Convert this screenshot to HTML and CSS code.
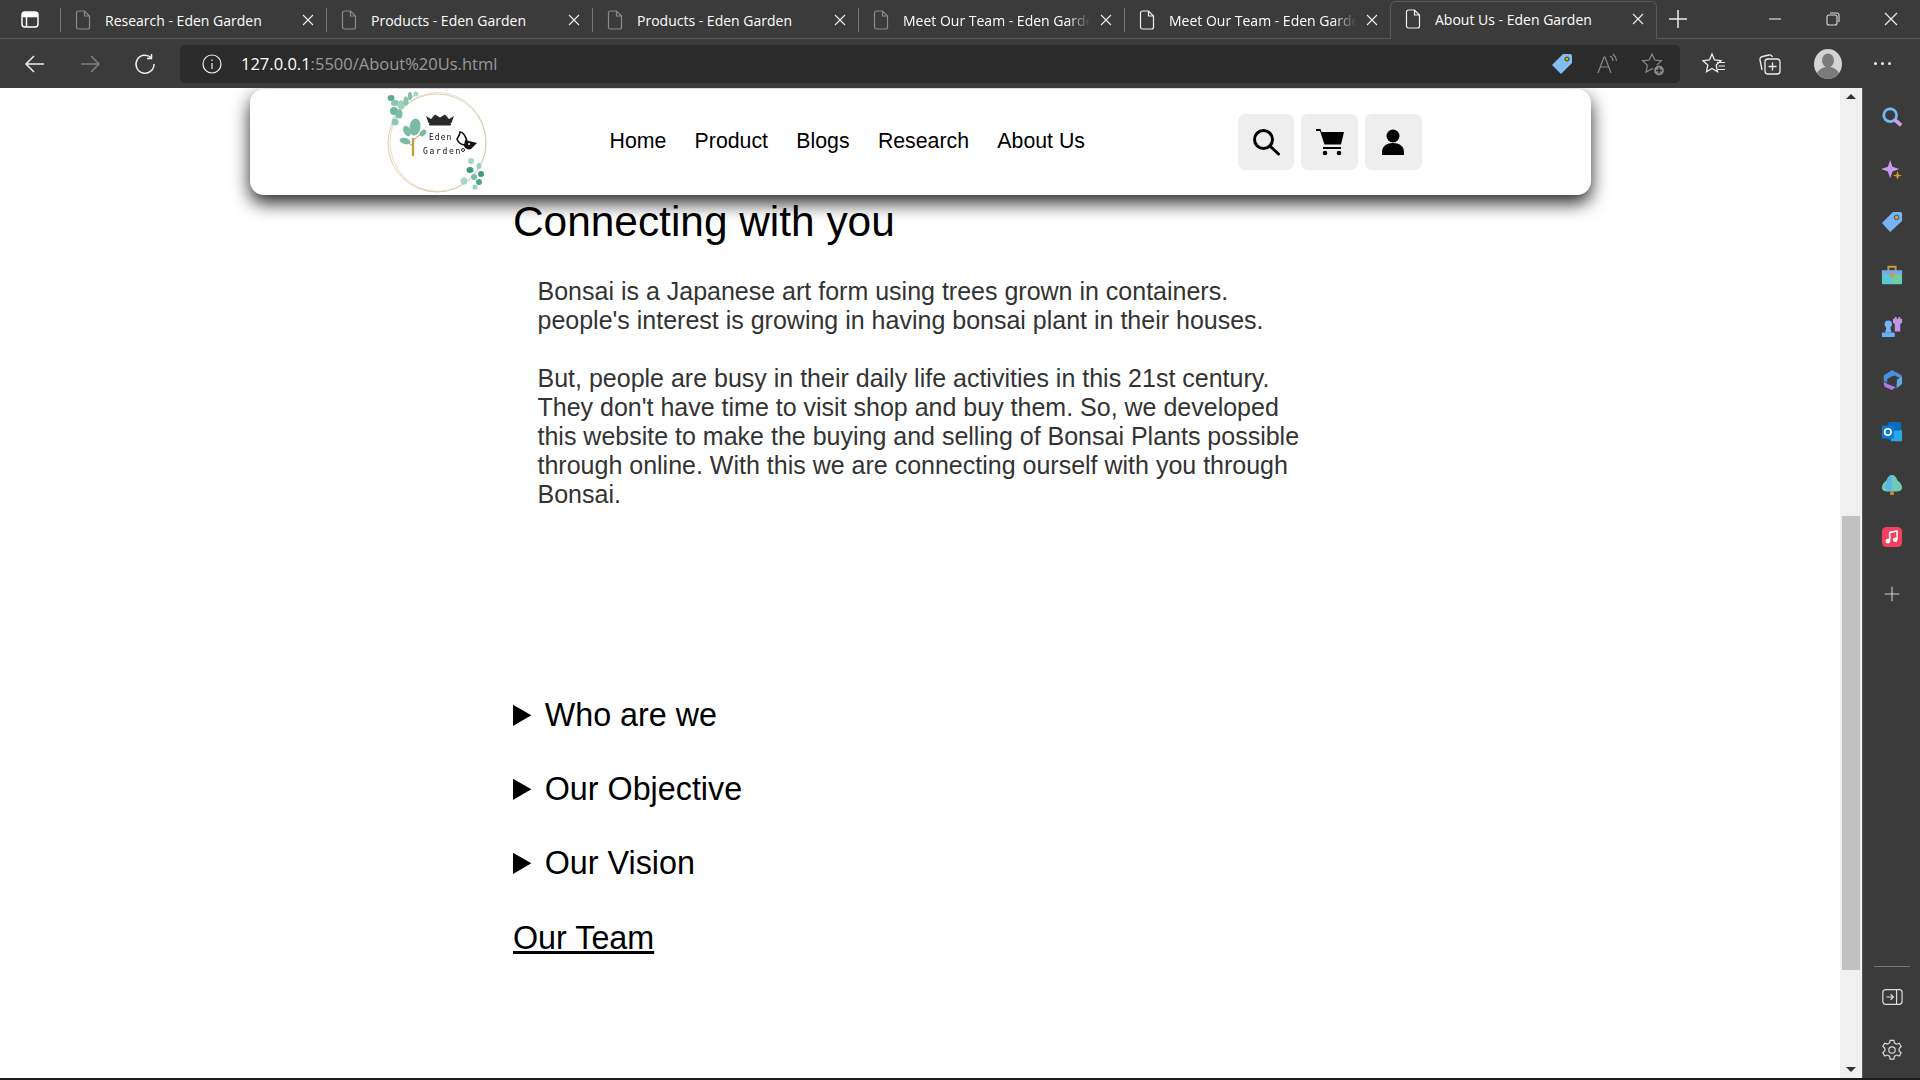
FILE: index.html
```html
<!DOCTYPE html>
<html lang="en">
<head>
  <meta charset="UTF-8" />
  <title>About Us - Eden Garden</title>
  <link rel="stylesheet" href="styles.css">
</head>
<body>

  <!-- browser tab strip -->
  <div class="tabstrip">
    <div class="tab-toggle">
      <svg width="20" height="20" viewBox="0 0 20 20" fill="none" stroke="#fff" stroke-width="1.5"><rect x="2" y="3" width="16" height="15" rx="3"/><path d="M2 7.500h16M6.500 7.500V18"/><path d="M3 4h14v3H3z" fill="#fff"/></svg>
    </div>
    <div class="tab"><svg class="doc dim" viewBox="0 0 16 20"><path d="M1.500 3a2 2 0 0 1 2-2h6l5 5v11a2 2 0 0 1-2 2h-9a2 2 0 0 1-2-2zM9.500 1v5h5"/></svg><span class="tab-title">Research - Eden Garden</span><svg class="tab-x" viewBox="0 0 12 12"><path d="M1 1l10 10M11 1L1 11"/></svg></div>
    <div class="tab"><svg class="doc dim" viewBox="0 0 16 20"><path d="M1.500 3a2 2 0 0 1 2-2h6l5 5v11a2 2 0 0 1-2 2h-9a2 2 0 0 1-2-2zM9.500 1v5h5"/></svg><span class="tab-title">Products - Eden Garden</span><svg class="tab-x" viewBox="0 0 12 12"><path d="M1 1l10 10M11 1L1 11"/></svg></div>
    <div class="tab"><svg class="doc dim" viewBox="0 0 16 20"><path d="M1.500 3a2 2 0 0 1 2-2h6l5 5v11a2 2 0 0 1-2 2h-9a2 2 0 0 1-2-2zM9.500 1v5h5"/></svg><span class="tab-title">Products - Eden Garden</span><svg class="tab-x" viewBox="0 0 12 12"><path d="M1 1l10 10M11 1L1 11"/></svg></div>
    <div class="tab"><svg class="doc dim" viewBox="0 0 16 20"><path d="M1.500 3a2 2 0 0 1 2-2h6l5 5v11a2 2 0 0 1-2 2h-9a2 2 0 0 1-2-2zM9.500 1v5h5"/></svg><span class="tab-title fade">Meet Our Team - Eden Garden</span><svg class="tab-x" viewBox="0 0 12 12"><path d="M1 1l10 10M11 1L1 11"/></svg></div>
    <div class="tab"><svg class="doc" viewBox="0 0 16 20"><path d="M1.500 3a2 2 0 0 1 2-2h6l5 5v11a2 2 0 0 1-2 2h-9a2 2 0 0 1-2-2zM9.500 1v5h5"/></svg><span class="tab-title fade">Meet Our Team - Eden Garden</span><svg class="tab-x" viewBox="0 0 12 12"><path d="M1 1l10 10M11 1L1 11"/></svg></div>
    <div class="tab active"><svg class="doc" viewBox="0 0 16 20"><path d="M1.500 3a2 2 0 0 1 2-2h6l5 5v11a2 2 0 0 1-2 2h-9a2 2 0 0 1-2-2zM9.500 1v5h5"/></svg><span class="tab-title">About Us - Eden Garden</span><svg class="tab-x" viewBox="0 0 12 12"><path d="M1 1l10 10M11 1L1 11"/></svg></div>
    <div class="new-tab"><svg width="18" height="18" viewBox="0 0 18 18" stroke="#eee" stroke-width="1.500"><path d="M9 0v18M0 9h18"/></svg></div>
    <div class="win-btns">
      <svg width="14" height="14" viewBox="0 0 14 14" stroke="#ddd" stroke-width="1.200"><path d="M1 7h12"/></svg>
      <svg width="14" height="14" viewBox="0 0 14 14" fill="none" stroke="#ddd" stroke-width="1.100"><rect x="1" y="3" width="10" height="10" rx="2"/><path d="M4 1h7a2 2 0 0 1 2 2v7"/></svg>
      <svg width="14" height="14" viewBox="0 0 14 14" stroke="#eee" stroke-width="1.200"><path d="M1 1l12 12M13 1L1 13"/></svg>
    </div>
  </div>

  <!-- address bar row -->
  <div class="toolbar">
    <div class="nav-btns">
      <svg width="22" height="22" viewBox="0 0 22 22" fill="none" stroke="#eee" stroke-width="1.500"><path d="M20 11H2M10 3l-8 8 8 8"/></svg>
      <svg width="22" height="22" viewBox="0 0 22 22" fill="none" stroke="#808080" stroke-width="1.500"><path d="M2 11h18M12 3l8 8-8 8"/></svg>
      <svg width="22" height="22" viewBox="0 0 22 22" fill="none" stroke="#eee" stroke-width="1.500"><path d="M17 4.500A9 9 0 1 0 20 11M17.500 1v4.500h-4.500"/></svg>
    </div>
    <div class="addressbar">
      <svg width="20" height="20" viewBox="0 0 20 20" fill="none" stroke="#eee" stroke-width="1.200"><circle cx="10" cy="10" r="9"/><path d="M10 9v6M10 5.500v1.500"/></svg>
      <span class="url"><b>127.0.0.1</b>:5500/About%20Us.html</span>
      <div class="addr-icons">
        <svg width="22" height="22" viewBox="0 0 22 22"><path d="M12 1h7a2 2 0 0 1 2 2v7L10 21 1 12z" fill="#80bdf0"/><circle cx="16" cy="6" r="2" fill="#e0b000" stroke="#333"/></svg>
        <svg width="22" height="22" viewBox="0 0 22 22" fill="none" stroke="#8a8a8a" stroke-width="1.200"><path d="M2 20L8 4h1l6 16M4.500 14h8.500M14 3c2 1 3 3 3 5M17 1c2 2 3.500 4 3.500 7"/></svg>
        <svg width="24" height="24" viewBox="0 0 24 24" fill="none" stroke="#8a8a8a" stroke-width="1.200"><path d="M11 2l2.800 6 6.700.8-4.900 4.600 1.300 6.600-5.900-3.300L5.100 20l1.300-6.600L1.500 8.800l6.700-.8z"/><circle cx="18" cy="18.500" r="5.500" fill="#8a8a8a" stroke="#2b2b2b"/><path d="M18 15.500v6M15 18.500h6" stroke="#2b2b2b" stroke-width="1.400"/></svg>
      </div>
    </div>
    <div class="tool-icons">
      <svg width="24" height="24" viewBox="0 0 24 24" fill="none" stroke="#eee" stroke-width="1.300"><path d="M10 2l2.500 6 6.500.7-4.800 4.400 1.300 6.700L10 16.500l-5.500 3.300 1.300-6.700L1 8.700 7.500 8z"/><path d="M15 10.500h8M16.500 14h6.500M16 17.500h7" stroke-width="1.200"/></svg>
      <svg width="24" height="24" viewBox="0 0 24 24" fill="none" stroke="#eee" stroke-width="1.300"><path d="M4 18L2 8a3 3 0 0 1 2.500-3.500L11 3c2-.4 3 .5 3.500 2"/><rect x="7" y="7" width="15" height="15" rx="3"/><path d="M14.500 10.500v8M10.500 14.500h8"/></svg>
      <svg class="avatar" width="28" height="30" viewBox="0 0 28 30"><ellipse cx="14" cy="15" rx="14" ry="15" fill="#d4d4d4"/><ellipse cx="14" cy="11.500" rx="6" ry="7" fill="#7a7a7a"/><path d="M3 24c3-5 7-6 11-6s8 1 11 6c-3 4-7 6-11 6s-8-2-11-6z" fill="#7a7a7a"/></svg>
      <div class="dots"><i></i><i></i><i></i></div>
    </div>
  </div>

  <div class="viewport">
    <div class="page">

      <header class="site-nav">
        <svg class="logo" viewBox="0 0 104 104" width="104" height="104">
          <g fill="none" stroke="#d3c49c">
            <circle cx="52" cy="53" r="49" stroke-width=".8"/>
            <ellipse cx="53" cy="52" rx="48" ry="49.500" stroke-width=".6"/>
          </g>
          <!-- top left sprig -->
          <path d="M7 30C14 20 20 10 32 4" fill="none" stroke="#8fc4b2" stroke-width=".8"/>
          <g fill="#79bca6">
            <ellipse cx="6" cy="8" rx="3.500" ry="3" fill="#5fa893"/>
            <ellipse cx="10" cy="13" rx="4" ry="3" fill="#89c6b2"/>
            <ellipse cx="9" cy="21" rx="4" ry="4" fill="#6fb59f"/>
            <ellipse cx="16" cy="15" rx="3.500" ry="4.500" fill="#9ad0bd"/>
            <ellipse cx="21" cy="11" rx="2.500" ry="4.500" fill="#8ac5b1"/>
            <ellipse cx="25" cy="6" rx="2" ry="4" fill="#7fbfa9"/>
            <ellipse cx="31" cy="4" rx="2.500" ry="2.500" fill="#a7d6c5"/>
            <ellipse cx="14" cy="24" rx="3.500" ry="4.500"/>
            <ellipse cx="10" cy="32" rx="3.500" ry="3.500" fill="#8cc7b3"/>
          </g>
          <!-- bottom right sprig -->
          <g fill="#79bca6">
            <ellipse cx="86" cy="71" rx="3" ry="3" fill="#a7d6c5"/>
            <ellipse cx="85" cy="80" rx="3.500" ry="3" fill="#3f9a80"/>
            <ellipse cx="94" cy="76" rx="2.500" ry="3" fill="#9ad0bd"/>
            <ellipse cx="96" cy="84" rx="3" ry="3" fill="#3f9a80"/>
            <ellipse cx="79" cy="91" rx="3.500" ry="3.500" fill="#a7d6c5"/>
            <ellipse cx="89" cy="87" rx="3" ry="3"/>
            <ellipse cx="94" cy="92" rx="3" ry="3" fill="#4fa58c"/>
            <ellipse cx="90" cy="97" rx="2.500" ry="2.500" fill="#9ad0bd"/>
          </g>
          <!-- crown -->
          <path d="M41 26l5 3 4-4.500 5 3 5-3 4 4.500 5-3-2.500 7H43.500z" fill="#2a2a2a"/>
          <rect x="44" y="33" width="22" height="2.500" rx="1" fill="#2a2a2a"/>
          <!-- tree -->
          <path d="M28 66V48" stroke="#c79a3e" stroke-width="2.300"/>
          <path d="M28 56l-6-4M28 50l8-6" stroke="#c79a3e"/>
          <g fill="#79bca6">
            <ellipse cx="30" cy="37" rx="5.500" ry="8.500" transform="rotate(8 30 37)"/>
            <ellipse cx="22" cy="41" rx="3.500" ry="5.500" transform="rotate(-25 22 41)"/>
            <ellipse cx="20" cy="51" rx="5.500" ry="3" transform="rotate(15 20 51)"/>
            <ellipse cx="38" cy="43" rx="4" ry="2.500" transform="rotate(-40 38 43)"/>
          </g>
          <!-- butterfly -->
          <path d="M75 42c3 0 6 4 7 10l-2 3c-4 0-7-3-8-6 1-2 3-4 3-7z" fill="#fff" stroke="#111" stroke-width="1.600"/>
          <path d="M80 50l12 3-6 6c-2 1-6 0-7-3z" fill="#111"/>
          <circle cx="84" cy="54" r="1" fill="#fff"/>
          <circle cx="78" cy="60" r="1.500" fill="none" stroke="#111" stroke-width=".9"/>
          <text class="logo-text eden" x="44" y="50">Eden</text>
          <text class="logo-text garden" x="38" y="64">Garden</text>
        </svg>
        <nav class="main-links">
          <a href="#">Home</a>
          <a href="#">Product</a>
          <a href="#">Blogs</a>
          <a href="#">Research</a>
          <a href="#">About Us</a>
        </nav>
        <div class="nav-actions">
          <button class="icon-btn"><svg width="28" height="28" viewBox="0 0 28 28" fill="none" stroke="#000" stroke-width="3"><circle cx="11.500" cy="11.500" r="9"/><path d="M18 18l8.500 8" stroke-linecap="round"/></svg></button>
          <button class="icon-btn"><svg width="30" height="28" viewBox="0 0 30 28"><path d="M1 1h4.500l1 3H29l-3 12.500H9.500L5 3H1z" fill="#000"/><path d="M8 20h18" stroke="#000" stroke-width="2"/><circle cx="10" cy="25" r="2.300"/><circle cx="24" cy="25" r="2.300"/></svg></button>
          <button class="icon-btn"><svg width="24" height="26" viewBox="0 0 24 26"><circle cx="12" cy="7" r="6.500"/><path d="M1 26v-3c0-6 5-9 11-9s11 3 11 9v3z"/></svg></button>
        </div>
      </header>

      <main class="about">
        <h1>Connecting with you</h1>
        <p class="intro">
          Bonsai is a Japanese art form using trees grown in containers.<br>
          people's interest is growing in having bonsai plant in their houses.<br><br>
          But, people are busy in their daily life activities in this 21st century. They don't have time to visit shop and buy them. So, we developed this website to make the buying and selling of Bonsai Plants possible through online. With this we are connecting ourself with you through Bonsai.
        </p>

        <details><summary><span>Who are we</span></summary></details>
        <details><summary><span>Our Objective</span></summary></details>
        <details><summary><span>Our Vision</span></summary></details>
        <a class="team-link" href="#">Our Team</a>
      </main>
    </div>

    <div class="scrollbar">
      <div class="arrow up"></div>
      <div class="track"><div class="thumb"></div></div>
      <div class="arrow down"></div>
    </div>

    <aside class="sidebar">
      <svg viewBox="0 0 24 24"><circle cx="10" cy="10" r="7" fill="none" stroke="#74b8f5" stroke-width="3"/><path d="M15 15l7 6" stroke="#c9a0ea" stroke-width="4"/></svg>
      <svg viewBox="0 0 24 24"><path d="M10 1l2.500 7.500L20 11l-7.500 2.500L10 21l-2.500-7.500L0 11l7.500-2.500z" fill="#c59cf0"/><path d="M18 13l1.200 3.800L23 18l-3.800 1.200L18 23l-1.200-3.800L13 18l3.800-1.200z" fill="#dc9a18"/></svg>
      <svg viewBox="0 0 24 24"><path d="M13 1h8a2 2 0 0 1 2 2v8L10 23 1 13z" fill="#76b4f8"/><circle cx="17" cy="7" r="2.500" fill="#e0962a" stroke="#24507a"/></svg>
      <svg viewBox="0 0 24 24"><path d="M8 7V3h8v4" fill="none" stroke="#c69a3a" stroke-width="2"/><rect x="1" y="7" width="22" height="15" rx="1" fill="#5ec6d6"/><rect x="12" y="11" width="10" height="10" fill="#74cc96"/><rect x="1" y="7" width="22" height="4" fill="#7aa8f0"/><rect x="10" y="10" width="4" height="4" fill="#d8982a"/></svg>
      <svg viewBox="0 0 24 24"><path d="M15 1h2v2h2V1h2v2h2v4l-2 2v8h-6V9l-2-2V3h2z" fill="#c094e6"/><circle cx="8" cy="9" r="4" fill="#74b4f8"/><path d="M6 12h4l1.500 6h-7z" fill="#74b4f8"/><rect x="1" y="18" width="14" height="5" rx="1" fill="#6cb0f4"/></svg>
      <svg viewBox="0 0 24 24"><path d="M3 7l9-6 9 5v4l-6-3-3 1-5 3v4l-4-2z" fill="#4a8fe0"/><path d="M21 6c2 1 2 3 2 5v5l-2 2-4 3v-9l4-3z" fill="#5aa8e8"/><path d="M3 14l4 2 9 4-4 3-7-3c-2-1-2-4-2-6z" fill="#a97de0"/><path d="M7 12l5-3 5 2v5l-5 2-5-2z" fill="#3b3b3b"/></svg>
      <svg viewBox="0 0 24 24"><rect x="8" y="1" width="14" height="20" rx="1" fill="#0f6cbd"/><path d="M11 11l12-1v12H11z" fill="#28a8ea"/><rect x="1" y="5" width="13" height="14" rx="1" fill="#0a78d4"/><circle cx="7.500" cy="12" r="3.500" fill="none" stroke="#fff" stroke-width="1.800"/></svg>
      <svg viewBox="0 0 24 24"><path d="M12 1c3 0 5 3 6 6 3 2 5 5 5 8s-3 4-5 4H6c-2 0-5-1-5-4s2-6 5-8c1-3 3-6 6-6z" fill="#6cccb4"/><path d="M12 1c-3 0-6 5-7 9-1 3 0 9 7 9z" fill="#5ab8e0"/><rect x="10" y="19" width="4" height="4" fill="#d08a20"/></svg>
      <svg viewBox="0 0 24 24"><rect x="1" y="1" width="22" height="22" rx="5" fill="#f43f5e"/><path d="M9.500 16V7l8-1.500v9" fill="none" stroke="#fff" stroke-width="1.800"/><circle cx="7.500" cy="16.500" r="2.500" fill="#fff"/><circle cx="15.500" cy="15" r="2.500" fill="#fff"/></svg>
      <svg class="add" viewBox="0 0 24 24" stroke="#ccc" stroke-width="1.200"><path d="M12 4v16M4 12h16"/></svg>
      <div class="side-bottom">
        <hr>
        <svg viewBox="0 0 24 24" fill="none" stroke="#ddd" stroke-width="1.300"><rect x="2" y="4" width="21" height="16" rx="3"/><path d="M17 4v16M6 12h7M10.500 9l3 3-3 3"/></svg>
        <svg viewBox="0 0 24 24" fill="none" stroke="#ddd" stroke-width="1.300"><circle cx="12" cy="12" r="3.500"/><path d="M10 1.500h4l.7 3 2.400 1.200 2.900-1 2 3.500-2.200 2.100v2.700L22 15l-2 3.500-2.900-1-2.400 1.300-.7 3.200h-4l-.7-3.200-2.400-1.300-2.900 1L2 15l2.200-2.200v-2.700L2 8l2-3.500 2.900 1 2.400-1.200z"/></svg>
      </div>
    </aside>
  </div>

  <div class="taskbar-edge"></div>

</body>
</html>
```

FILE: styles.css
```css
* {
  box-sizing: border-box;
}
html, body {
  height: 100%;
}
body {
  margin: 0;
  display: flex;
  flex-direction: column;
  height: 1080px;
  overflow: hidden;
  font-family: "Liberation Sans", Arial, sans-serif;
  background: #fff;
}

/* tab strip */
.tabstrip {
  height: 39px;
  background: #3b3b3b;
  border-bottom: 1px solid #5a5a5a;
  display: flex;
  align-items: stretch;
  color: #fff;
  font-family: "Open Sans", sans-serif;
  font-size: 14px;
}
.tab-toggle {
  width: 60px;
  display: flex;
  align-items: center;
  justify-content: center;
}
.tab {
  width: 266px;
  margin-top: 8px;
  margin-bottom: 6px;
  padding: 0 12px 0 14px;
  display: flex;
  align-items: center;
  border-left: 1px solid #777;
}
.tab.active {
  margin: 1px 0 -1px;
  padding: 0 12px 3px 14px;
  width: 267px;
  background: #3b3b3b;
  border: 1px solid #5a5a5a;
  border-bottom: none;
  border-radius: 6px 6px 0 0;
}
.doc {
  width: 16px;
  height: 20px;
  flex: none;
  fill: none;
  stroke: #f0f0f0;
  stroke-width: 1.200;
}
.doc.dim {
  stroke: #8a8a8a;
}
.tab-title {
  margin-left: 14px;
  flex: 1;
  white-space: nowrap;
  overflow: hidden;
}
.tab-title.fade {
  -webkit-mask-image: linear-gradient(to right, #000 88%, transparent 100%);
  mask-image: linear-gradient(to right, #000 88%, transparent 100%);
}
.tab-x {
  width: 12px;
  height: 12px;
  flex: none;
  margin-left: 10px;
  stroke: #eee;
  stroke-width: 1.100;
}
.new-tab {
  width: 42px;
  display: flex;
  align-items: center;
  justify-content: center;
}
.win-btns {
  margin-left: auto;
  width: 204px;
  display: flex;
  align-items: center;
  justify-content: space-between;
  padding: 0 22px 0 52px;
}

/* toolbar */
.toolbar {
  height: 49px;
  background: #3b3b3b;
  display: flex;
  align-items: center;
}
.nav-btns {
  width: 180px;
  padding: 0 24px;
  display: flex;
  align-items: center;
  justify-content: space-between;
}
.addressbar {
  width: 1500px;
  height: 38px;
  background: #2b2b2b;
  border-radius: 5px;
  display: flex;
  align-items: center;
  padding: 0 15px 0 22px;
}
.url {
  margin-left: 19px;
  font-family: "Open Sans", sans-serif;
  font-size: 16.500px;
  color: #9a9a9a;
}
.url b {
  font-weight: 400;
  color: #fff;
}
.addr-icons {
  margin-left: auto;
  display: flex;
  align-items: center;
  gap: 23px;
}
.tool-icons {
  flex: 1;
  display: flex;
  align-items: center;
  gap: 32px;
  padding-left: 22px;
}
.dots {
  display: flex;
  gap: 4px;
}
.dots i {
  width: 3px;
  height: 3px;
  border-radius: 50%;
  background: #eee;
}

/* main area */
.viewport {
  flex: 1;
  min-height: 0;
  display: flex;
}
.page {
  flex: 1;
  min-width: 0;
  overflow: hidden;
}
.site-nav {
  position: relative;
  z-index: 2;
  width: 1341px;
  height: 106px;
  margin: 1px auto 0;
  background: #fff;
  border-radius: 14px;
  box-shadow: 0 8px 18px rgba(0,0,0,0.85);
  display: flex;
  align-items: center;
  padding: 0 169px 0 135px;
}
.logo {
  flex: none;
  filter: blur(0.3px);
}
.logo-text {
  font-family: "DejaVu Sans Mono", monospace;
  font-size: 8px;
  fill: #111;
}
.logo-text.eden {
  letter-spacing: 1px;
}
.logo-text.garden {
  letter-spacing: 1.700px;
}
.main-links {
  margin-left: 121px;
  margin-top: -2px;
  display: flex;
  gap: 28.300px;
}
.main-links a {
  font-size: 21.300px;
  color: #000;
  text-decoration: none;
}
.nav-actions {
  margin-left: auto;
  display: flex;
  gap: 7px;
}
.icon-btn {
  width: 56.670px;
  height: 56px;
  padding: 0;
  border: none;
  border-radius: 7px;
  background: #eeeeee;
  display: flex;
  align-items: center;
  justify-content: center;
}

/* about content */
.about {
  padding: 3px 0 0 513px;
}
.about h1 {
  margin: 0;
  font-size: 42.400px;
  line-height: 48px;
  font-weight: 400;
  color: #000;
}
.intro {
  width: 775px;
  margin: 31px 0 188px 24.500px;
  font-size: 25px;
  line-height: 29px;
  color: #333;
}
details {
  margin-bottom: 37.200px;
  font-size: 32.300px;
  line-height: 37px;
  color: #000;
}
summary span {
  margin-left: -2.500px;
}
.team-link {
  font-size: 32.300px;
  line-height: 37px;
  color: #000;
}

/* page scrollbar */
.scrollbar {
  width: 22px;
  flex: none;
  background: #f0f0f0;
  display: flex;
  flex-direction: column;
  align-items: center;
}
.arrow {
  height: 17px;
  display: flex;
  align-items: center;
  justify-content: center;
}
.arrow::before {
  content: "";
  border-left: 5px solid transparent;
  border-right: 5px solid transparent;
}
.arrow.up::before {
  border-bottom: 5px solid #333;
}
.arrow.down::before {
  border-top: 5px solid #333;
}
.track {
  flex: 1;
  width: 100%;
  padding: 411px 2px 91px;
}
.thumb {
  height: 100%;
  background: #c1c1c1;
}

/* edge sidebar */
.sidebar {
  width: 58px;
  flex: none;
  background: #3b3b3b;
  border-left: 1px solid #5a5a5a;
  display: flex;
  flex-direction: column;
  align-items: center;
  padding-top: 18px;
  gap: 30.500px;
}
.sidebar svg {
  width: 22px;
  height: 22px;
  flex: none;
}
.sidebar .add {
  margin-top: 4px;
}
.side-bottom {
  margin-top: auto;
  padding-bottom: 17px;
  display: flex;
  flex-direction: column;
  align-items: center;
  gap: 31px;
}
.side-bottom hr {
  width: 36px;
  height: 1px;
  margin: 0 0 -12px;
  border: none;
  background: #777;
}
.taskbar-edge {
  height: 2px;
  background: #1c1c1c;
}
```
